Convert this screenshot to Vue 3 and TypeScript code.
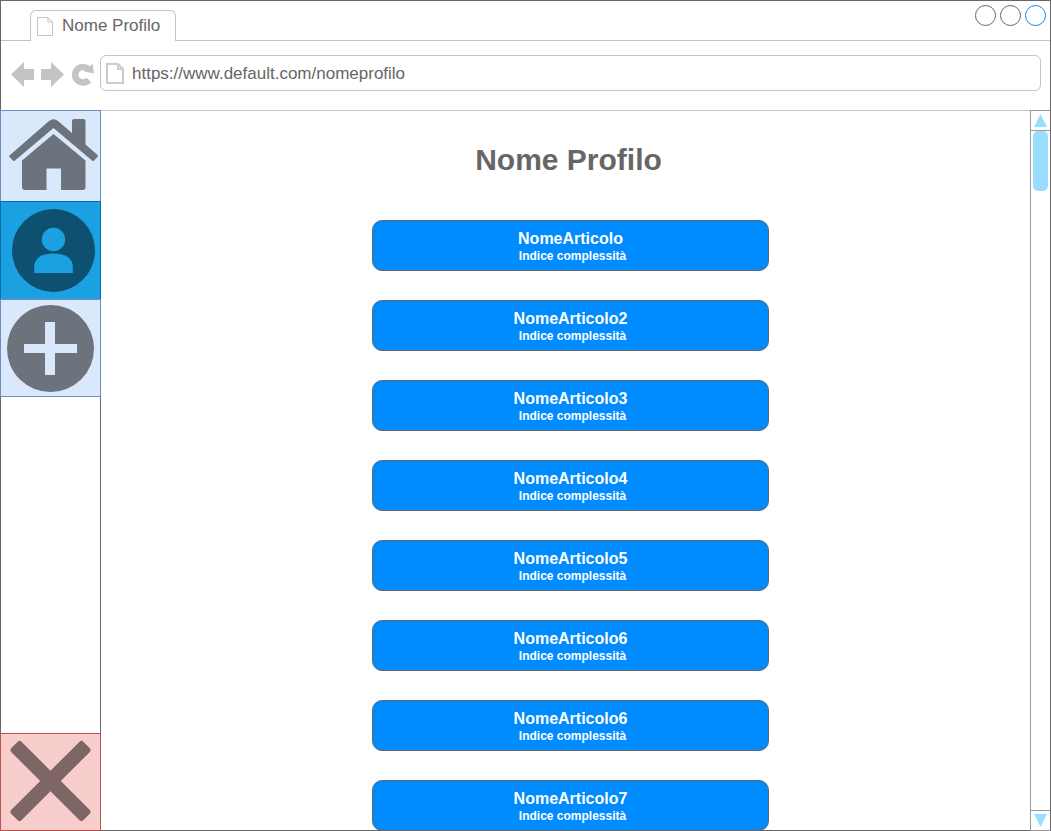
<script setup lang="ts">
import { ref } from 'vue'

interface Article {
  id: number
  name: string
}

const profileName = 'Nome Profilo'
const address = ref('https://www.default.com/nomeprofilo')

const articles: Article[] = [
  'NomeArticolo',
  'NomeArticolo2',
  'NomeArticolo3',
  'NomeArticolo4',
  'NomeArticolo5',
  'NomeArticolo6',
  'NomeArticolo6',
  'NomeArticolo7',
].map((name, id) => ({ id, name }))
</script>

<template>
  <div class="window">
    <header class="chrome">
      <div class="tabbar">
        <div class="tab">
          <svg class="tab-icon" viewBox="0 0 16 19" aria-hidden="true">
            <path d="M.5 .5H11L15.500 5V18.500H.5ZM11 .5V5H15.500" />
          </svg>
          <span>{{ profileName }}</span>
        </div>
        <div class="controls">
          <button class="control" type="button" aria-label="Riduci"></button>
          <button class="control" type="button" aria-label="Ingrandisci"></button>
          <button class="control accent" type="button" aria-label="Chiudi finestra"></button>
        </div>
      </div>
      <div class="toolbar">
        <nav class="history" aria-label="Cronologia">
          <button type="button" aria-label="Indietro">
            <svg viewBox="0 0 24 26"><path d="M0 12.500L13 0V7H23V18H13V25Z" /></svg>
          </button>
          <button type="button" aria-label="Avanti">
            <svg viewBox="0 0 24 26"><path d="M23 12.500L10 0V7H0V18H10V25Z" /></svg>
          </button>
          <button type="button" aria-label="Ricarica">
            <svg viewBox="0 0 24 26">
              <path class="arc" d="M17 6.800A7.800 7.800 0 1 0 17.800 18" />
              <path d="M21.500 1.800L23 11.500L13 9.500Z" />
            </svg>
          </button>
        </nav>
        <label class="address">
          <svg class="page-icon" viewBox="0 0 18 21" aria-hidden="true">
            <path d="M1 1H12L17 6V20H1ZM12 1V6H17" />
          </svg>
          <input v-model="address" type="text" aria-label="Indirizzo" />
        </label>
      </div>
    </header>

    <div class="body">
      <aside class="sidebar">
        <button class="side home" type="button" aria-label="Home">
          <svg viewBox="0 0 99 90">
            <path d="M8.500 44.500L48 10Q52.500 6.500 57 10L71 22V10Q71 8 73 8H82.500Q84.500 8 84.500 10V33.500L96.500 44Q97.500 45 96.500 46L93 49.500Q92 50.500 91 49.500L52.500 17L14 49.500Q13 50.500 12 49.500L8.500 46Q7.500 45 8.500 44.500Z" />
            <path d="M52.500 23L84.500 49.500V76Q84.500 79 81.500 79H60V57.500H45.500V79H24Q21 79 21 76V49.500Z" />
          </svg>
        </button>
        <button class="side profile" type="button" aria-label="Profilo" aria-current="page">
          <svg viewBox="0 0 99 97">
            <circle cx="52.500" cy="48.500" r="41.500" />
            <circle class="cut" cx="52.500" cy="37.500" r="11.700" />
            <path class="cut" d="M33.200 71V64Q34.500 51.500 52.500 51.500T71.800 64V71Z" />
          </svg>
        </button>
        <button class="side add" type="button" aria-label="Aggiungi">
          <svg viewBox="0 0 99 96">
            <circle cx="49.500" cy="48.500" r="43.500" />
            <path class="cut" d="M44 22H54V44H76V53H54V75H44V53H23V44H44Z" />
          </svg>
        </button>
        <button class="side close" type="button" aria-label="Esci">
          <svg viewBox="0 0 99 96">
            <rect x="-1.500" y="39.700" width="102" height="14.600" rx="3" transform="rotate(45 49.500 47)" />
            <rect x="-1.500" y="39.700" width="102" height="14.600" rx="3" transform="rotate(-45 49.500 47)" />
          </svg>
        </button>
      </aside>

      <main class="content">
        <h1>{{ profileName }}</h1>
        <div class="articles">
          <button v-for="article in articles" :key="article.id" class="article" type="button">
            <span class="name">{{ article.name }}</span>
            <span class="index">Indice complessità</span>
          </button>
        </div>
      </main>

      <div class="scrollbar">
        <button type="button" aria-label="Scorri su">
          <svg viewBox="0 0 13 13"><path d="M6.500 0L13 13H0Z" /></svg>
        </button>
        <div class="track"><div class="thumb"></div></div>
        <button class="down" type="button" aria-label="Scorri giù">
          <svg viewBox="0 0 13 13"><path d="M0 0H13L6.500 13Z" /></svg>
        </button>
      </div>
    </div>
  </div>
</template>

<style>
body {
  margin: 0;
  background: #fff;
}
</style>

<style scoped>
.window {
  display: flex;
  flex-direction: column;
  height: 100vh;
  color: #666;
  font-family: "Liberation Sans", Arial, sans-serif;
  font-size: 17px;
}

.window * {
  box-sizing: border-box;
}

button {
  margin: 0;
  padding: 0;
  border: 0;
  background: none;
  color: inherit;
  font: inherit;
  cursor: pointer;
}

svg {
  display: block;
}

.chrome {
  flex: none;
  border: 1px solid #666;
  border-bottom: 0;
}

.tabbar {
  display: flex;
  justify-content: space-between;
  height: 40px;
  padding: 0 4px 0 29px;
  border-bottom: 1px solid #c4c4c4;
}

.tab {
  display: flex;
  align-items: center;
  align-self: flex-end;
  gap: 9px;
  height: 31px;
  margin-bottom: -1px;
  padding: 0 15px 0 6px;
  border: 1px solid #c4c4c4;
  border-bottom: 0;
  border-radius: 6px 6px 0 0;
  background: #fff;
  line-height: 20px;
}

.tab-icon {
  width: 16px;
  height: 19px;
  margin-top: 1px;
  fill: none;
  stroke: #c4c4c4;
}

.controls {
  display: flex;
  gap: 4px;
  padding-top: 4px;
}

.control {
  width: 21px;
  height: 21px;
  border: 1px solid #666;
  border-radius: 50%;
}

.control.accent {
  border-color: #008cff;
}

.toolbar {
  display: flex;
  align-items: center;
  gap: 5px;
  height: 69px;
  padding: 0 9px 5px 10px;
}

.history {
  display: flex;
  gap: 6px;
  padding-top: 4px;
}

.history svg {
  width: 24px;
  height: 26px;
  fill: #c4c4c4;
}

.history .arc {
  fill: none;
  stroke: #c4c4c4;
  stroke-width: 6.5px;
}

.address {
  display: flex;
  flex: 1;
  align-items: center;
  gap: 8px;
  height: 36px;
  padding: 0 5px;
  border: 1px solid #c4c4c4;
  border-radius: 6px;
}

.page-icon {
  width: 18px;
  height: 21px;
  fill: none;
  stroke: #ccc;
  stroke-width: 2px;
}

.address input {
  flex: 1;
  min-width: 0;
  padding: 2px 0 0;
  border: 0;
  outline: 0;
  background: none;
  color: inherit;
  font: inherit;
  line-height: 20px;
}

.body {
  display: flex;
  flex: 1;
  min-height: 0;
}

.sidebar {
  display: flex;
  flex: none;
  flex-direction: column;
  width: 101px;
  border: 1px solid #666;
  border-top: 0;
}

.side {
  flex: none;
  margin: 0 -1px -1px;
  border: 1px solid #6c8ebf;
  background: #dae8fc;
}

.side svg {
  width: 100%;
  fill: #6c737c;
}

.side .cut {
  fill: #dae8fc;
}

.profile {
  border-color: #006eaf;
  background: #1ba1e2;
}

.profile svg {
  fill: #0e5070;
}

.profile .cut {
  fill: #1ba1e2;
}

.close {
  margin-top: auto;
  border-color: #b85450;
  background: #f8cecc;
}

.close svg {
  fill: #7d6665;
}

.content {
  flex: 1;
  min-width: 0;
  overflow: hidden;
  padding: 29px 0 0 10px;
  border-top: 1px solid #c4c4c4;
  border-bottom: 1px solid #666;
}

h1 {
  margin: 0 4px 40px 0;
  font-size: 30px;
  line-height: 40px;
  text-align: center;
}

.articles {
  display: flex;
  flex-direction: column;
  align-items: center;
  gap: 29px;
}

.article {
  display: flex;
  flex-direction: column;
  align-items: center;
  width: 100%;
  max-width: 397px;
  padding: 9px 0 6px;
  border: 1px solid #666;
  border-radius: 10px;
  background: #008cff;
  color: #fff;
  font-weight: bold;
}

.name {
  font-size: 16px;
  line-height: 18px;
}

.index {
  padding-left: 4px;
  font-size: 12px;
  line-height: 16px;
}

.scrollbar {
  display: flex;
  flex: none;
  flex-direction: column;
  width: 21px;
  border: 1px solid #999;
  border-right-color: #666;
}

.scrollbar button {
  display: flex;
  align-items: center;
  justify-content: center;
  height: 20px;
  border-bottom: 1px solid #999;
}

.scrollbar .down {
  border-top: 1px solid #999;
  border-bottom: 0;
}

.scrollbar svg {
  width: 13px;
  height: 13px;
  fill: #9df;
}

.track {
  flex: 1;
  padding: 0 2px;
}

.thumb {
  height: 60px;
  border-radius: 5px;
  background: #9df;
}
</style>
